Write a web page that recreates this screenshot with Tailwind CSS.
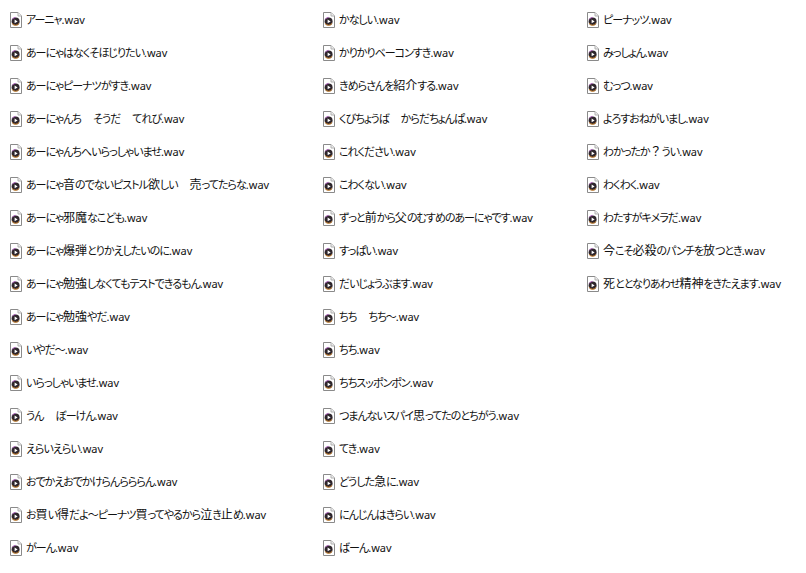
<!DOCTYPE html>
<html lang="ja"><head><meta charset="utf-8"><script src="https://cdn.jsdelivr.net/npm/@tailwindcss/browser@4"></script></head>
<body class="bg-white">
<svg class="hidden"><symbol id="i" viewBox="0 0 12 16"><path d="M.5.5H8L11.5 4V15.5H.5Z" fill="#fff" stroke="#8a8a8a"/><path d="M8 .5V4H11.5" fill="#eee" stroke="#b0b0b0"/><circle cx="5.6" cy="9.4" r="4" fill="#2e262c"/><path d="M2.2 7.4A4 4 0 0 1 5.6 5.4" stroke="#b060c0" fill="none"/><path d="M2.2 11.4A4 4 0 0 0 9 11.4" stroke="#e09030" fill="none"/><path d="M4.6 7.6 7.6 9.4 4.6 11.2Z" fill="#fff"/></symbol></svg>
<div class="w-[806px] h-[573px] overflow-hidden grid grid-flow-col grid-rows-[repeat(17,33px)] grid-cols-[313px_264px_1fr] pl-[10px] pt-[3px] font-['Noto_Sans','Noto_Sans_CJK_JP',sans-serif] text-[11px] tracking-[-1px] [font-feature-settings:'palt'] text-[#111] whitespace-nowrap [&>div>span]:before:content-['\200b'] [&>div>span]:before:text-[12px]">
<div class="flex items-center gap-[4px]"><svg class="w-3 h-4 shrink-0"><use href="#i"/></svg><span>アーニャ<span class="tracking-normal">.wav</span></span></div>
<div class="flex items-center gap-[4px]"><svg class="w-3 h-4 shrink-0"><use href="#i"/></svg><span>あーにゃはなくそほじりたい<span class="tracking-normal">.wav</span></span></div>
<div class="flex items-center gap-[4px]"><svg class="w-3 h-4 shrink-0"><use href="#i"/></svg><span>あーにゃピーナツがすき<span class="tracking-normal">.wav</span></span></div>
<div class="flex items-center gap-[4px]"><svg class="w-3 h-4 shrink-0"><use href="#i"/></svg><span>あーにゃんち<span class="text-[12px] tracking-normal">　</span>そうだ<span class="text-[12px] tracking-normal">　</span>てれび<span class="tracking-normal">.wav</span></span></div>
<div class="flex items-center gap-[4px]"><svg class="w-3 h-4 shrink-0"><use href="#i"/></svg><span>あーにゃんちへいらっしゃいませ<span class="tracking-normal">.wav</span></span></div>
<div class="flex items-center gap-[4px]"><svg class="w-3 h-4 shrink-0"><use href="#i"/></svg><span>あーにゃ<span class="text-[12px] tracking-normal">音</span>のでないピストル<span class="text-[12px] tracking-normal">欲</span>しい<span class="text-[12px] tracking-normal">　売</span>ってたらな<span class="tracking-normal">.wav</span></span></div>
<div class="flex items-center gap-[4px]"><svg class="w-3 h-4 shrink-0"><use href="#i"/></svg><span>あーにゃ<span class="text-[12px] tracking-normal">邪魔</span>なこども<span class="tracking-normal">.wav</span></span></div>
<div class="flex items-center gap-[4px]"><svg class="w-3 h-4 shrink-0"><use href="#i"/></svg><span>あーにゃ<span class="text-[12px] tracking-normal">爆弾</span>とりかえしたいのに<span class="tracking-normal">.wav</span></span></div>
<div class="flex items-center gap-[4px]"><svg class="w-3 h-4 shrink-0"><use href="#i"/></svg><span>あーにゃ<span class="text-[12px] tracking-normal">勉強</span>しなくてもテストできるもん<span class="tracking-normal">.wav</span></span></div>
<div class="flex items-center gap-[4px]"><svg class="w-3 h-4 shrink-0"><use href="#i"/></svg><span>あーにゃ<span class="text-[12px] tracking-normal">勉強</span>やだ<span class="tracking-normal">.wav</span></span></div>
<div class="flex items-center gap-[4px]"><svg class="w-3 h-4 shrink-0"><use href="#i"/></svg><span>いやだ～<span class="tracking-normal">.wav</span></span></div>
<div class="flex items-center gap-[4px]"><svg class="w-3 h-4 shrink-0"><use href="#i"/></svg><span>いらっしゃいませ<span class="tracking-normal">.wav</span></span></div>
<div class="flex items-center gap-[4px]"><svg class="w-3 h-4 shrink-0"><use href="#i"/></svg><span>うん<span class="text-[12px] tracking-normal">　</span>ぼーけん<span class="tracking-normal">.wav</span></span></div>
<div class="flex items-center gap-[4px]"><svg class="w-3 h-4 shrink-0"><use href="#i"/></svg><span>えらいえらい<span class="tracking-normal">.wav</span></span></div>
<div class="flex items-center gap-[4px]"><svg class="w-3 h-4 shrink-0"><use href="#i"/></svg><span>おでかえおでかけらんらららん<span class="tracking-normal">.wav</span></span></div>
<div class="flex items-center gap-[4px]"><svg class="w-3 h-4 shrink-0"><use href="#i"/></svg><span>お<span class="text-[12px] tracking-normal">買</span>い<span class="text-[12px] tracking-normal">得</span>だよ～ピーナツ<span class="text-[12px] tracking-normal">買</span>ってやるから<span class="text-[12px] tracking-normal">泣</span>き<span class="text-[12px] tracking-normal">止</span>め<span class="tracking-normal">.wav</span></span></div>
<div class="flex items-center gap-[4px]"><svg class="w-3 h-4 shrink-0"><use href="#i"/></svg><span>がーん<span class="tracking-normal">.wav</span></span></div>
<div class="flex items-center gap-[4px]"><svg class="w-3 h-4 shrink-0"><use href="#i"/></svg><span>かなしい<span class="tracking-normal">.wav</span></span></div>
<div class="flex items-center gap-[4px]"><svg class="w-3 h-4 shrink-0"><use href="#i"/></svg><span>かりかりベーコンすき<span class="tracking-normal">.wav</span></span></div>
<div class="flex items-center gap-[4px]"><svg class="w-3 h-4 shrink-0"><use href="#i"/></svg><span>きめらさんを<span class="text-[12px] tracking-normal">紹介</span>する<span class="tracking-normal">.wav</span></span></div>
<div class="flex items-center gap-[4px]"><svg class="w-3 h-4 shrink-0"><use href="#i"/></svg><span>くびちょうば<span class="text-[12px] tracking-normal">　</span>からだちょんぱ<span class="tracking-normal">.wav</span></span></div>
<div class="flex items-center gap-[4px]"><svg class="w-3 h-4 shrink-0"><use href="#i"/></svg><span>これください<span class="tracking-normal">.wav</span></span></div>
<div class="flex items-center gap-[4px]"><svg class="w-3 h-4 shrink-0"><use href="#i"/></svg><span>こわくない<span class="tracking-normal">.wav</span></span></div>
<div class="flex items-center gap-[4px]"><svg class="w-3 h-4 shrink-0"><use href="#i"/></svg><span>ずっと<span class="text-[12px] tracking-normal">前</span>から<span class="text-[12px] tracking-normal">父</span>のむすめのあーにゃです<span class="tracking-normal">.wav</span></span></div>
<div class="flex items-center gap-[4px]"><svg class="w-3 h-4 shrink-0"><use href="#i"/></svg><span>すっぱい<span class="tracking-normal">.wav</span></span></div>
<div class="flex items-center gap-[4px]"><svg class="w-3 h-4 shrink-0"><use href="#i"/></svg><span>だいじょうぶます<span class="tracking-normal">.wav</span></span></div>
<div class="flex items-center gap-[4px]"><svg class="w-3 h-4 shrink-0"><use href="#i"/></svg><span>ちち<span class="text-[12px] tracking-normal">　</span>ちち～<span class="tracking-normal">.wav</span></span></div>
<div class="flex items-center gap-[4px]"><svg class="w-3 h-4 shrink-0"><use href="#i"/></svg><span>ちち<span class="tracking-normal">.wav</span></span></div>
<div class="flex items-center gap-[4px]"><svg class="w-3 h-4 shrink-0"><use href="#i"/></svg><span>ちちスッポンポン<span class="tracking-normal">.wav</span></span></div>
<div class="flex items-center gap-[4px]"><svg class="w-3 h-4 shrink-0"><use href="#i"/></svg><span>つまんないスパイ<span class="text-[12px] tracking-normal">思</span>ってたのとちがう<span class="tracking-normal">.wav</span></span></div>
<div class="flex items-center gap-[4px]"><svg class="w-3 h-4 shrink-0"><use href="#i"/></svg><span>てき<span class="tracking-normal">.wav</span></span></div>
<div class="flex items-center gap-[4px]"><svg class="w-3 h-4 shrink-0"><use href="#i"/></svg><span>どうした<span class="text-[12px] tracking-normal">急</span>に<span class="tracking-normal">.wav</span></span></div>
<div class="flex items-center gap-[4px]"><svg class="w-3 h-4 shrink-0"><use href="#i"/></svg><span>にんじんはきらい<span class="tracking-normal">.wav</span></span></div>
<div class="flex items-center gap-[4px]"><svg class="w-3 h-4 shrink-0"><use href="#i"/></svg><span>ばーん<span class="tracking-normal">.wav</span></span></div>
<div class="flex items-center gap-[4px]"><svg class="w-3 h-4 shrink-0"><use href="#i"/></svg><span>ピーナッツ<span class="tracking-normal">.wav</span></span></div>
<div class="flex items-center gap-[4px]"><svg class="w-3 h-4 shrink-0"><use href="#i"/></svg><span>みっしょん<span class="tracking-normal">.wav</span></span></div>
<div class="flex items-center gap-[4px]"><svg class="w-3 h-4 shrink-0"><use href="#i"/></svg><span>むっつ<span class="tracking-normal">.wav</span></span></div>
<div class="flex items-center gap-[4px]"><svg class="w-3 h-4 shrink-0"><use href="#i"/></svg><span>よろすおねがいまし<span class="tracking-normal">.wav</span></span></div>
<div class="flex items-center gap-[4px]"><svg class="w-3 h-4 shrink-0"><use href="#i"/></svg><span>わかったか<span class="text-[12px] tracking-normal [font-feature-settings:normal]">？</span>うい<span class="tracking-normal">.wav</span></span></div>
<div class="flex items-center gap-[4px]"><svg class="w-3 h-4 shrink-0"><use href="#i"/></svg><span>わくわく<span class="tracking-normal">.wav</span></span></div>
<div class="flex items-center gap-[4px]"><svg class="w-3 h-4 shrink-0"><use href="#i"/></svg><span>わたすがキメラだ<span class="tracking-normal">.wav</span></span></div>
<div class="flex items-center gap-[4px]"><svg class="w-3 h-4 shrink-0"><use href="#i"/></svg><span><span class="text-[12px] tracking-normal">今</span>こそ<span class="text-[12px] tracking-normal">必殺</span>のパンチを<span class="text-[12px] tracking-normal">放</span>つとき<span class="tracking-normal">.wav</span></span></div>
<div class="flex items-center gap-[4px]"><svg class="w-3 h-4 shrink-0"><use href="#i"/></svg><span><span class="text-[12px] tracking-normal">死</span>ととなりあわせ<span class="text-[12px] tracking-normal">精神</span>をきたえます<span class="tracking-normal">.wav</span></span></div>
</div>
</body></html>
